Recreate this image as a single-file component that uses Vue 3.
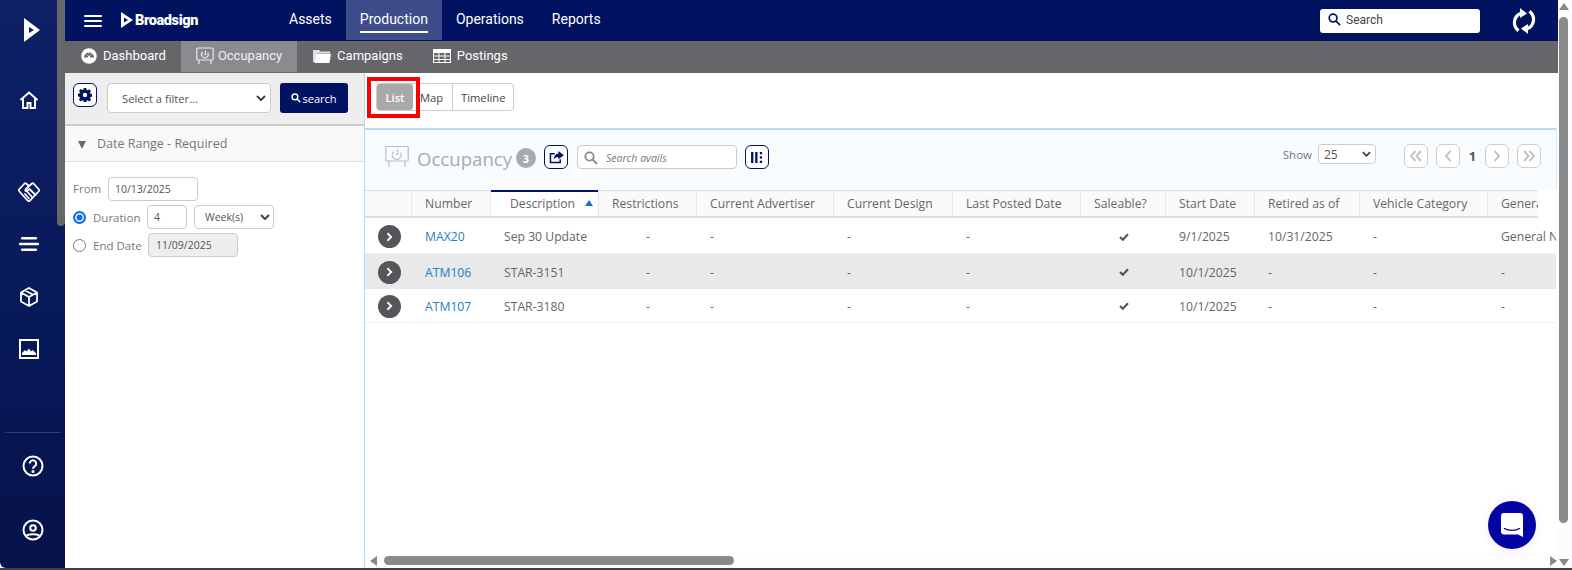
<script setup>
const columns = [
  { label: '', cls: '' },
  { label: 'Number', cls: '' },
  { label: 'Description', cls: 'sorted' },
  { label: 'Restrictions', cls: '' },
  { label: 'Current Advertiser', cls: '' },
  { label: 'Current Design', cls: '' },
  { label: 'Last Posted Date', cls: '' },
  { label: 'Saleable?', cls: '' },
  { label: 'Start Date', cls: '' },
  { label: 'Retired as of', cls: '' },
  { label: 'Vehicle Category', cls: '' },
  { label: 'General Notes', cls: '' }
]
const rows = [
  { num: 'MAX20', desc: 'Sep 30 Update', start: '9/1/2025', retired: '10/31/2025', general: 'General Notes' },
  { num: 'ATM106', desc: 'STAR-3151', start: '10/1/2025', retired: '-', general: '-' },
  { num: 'ATM107', desc: 'STAR-3180', start: '10/1/2025', retired: '-', general: '-' }
]
const topItems = ['Assets', 'Production', 'Operations', 'Reports']
</script>

<template>
  <div class="window">
    <div class="body">
      <aside class="rail">
        <div class="rail-thumb"></div>
        <svg class="r-logo" viewBox="0 0 16 24" width="16" height="24"><path fill="#fff" fill-rule="evenodd" d="M0 0l16 12L0 24zM5 9v6l5-3z"/></svg>
        <svg class="r-ico r-home" viewBox="0 0 20 20" width="20" height="20" fill="none" stroke="#fff" stroke-width="2"><path d="M1.500 10L10 2.500 18.500 10M4 8.500V18h4.500v-5h3v5H16V8.500"/></svg>
        <svg class="r-ico r-deal" viewBox="0 0 22 20" width="22" height="20" fill="none" stroke="#fff" stroke-width="1.800" stroke-linejoin="round" stroke-linecap="round"><path d="M6.500 1.500L1 7.500c-.4.500-.4 1 0 1.500l8.500 9.500c.8.900 1.800.9 2.600 0L21 9c.4-.5.4-1 0-1.500l-5.500-6c-.5-.4-1-.4-1.500 0L11 4 8 1.500c-.5-.4-1-.4-1.500 0z"/><path d="M11 4L7.500 7.500c-.8 1 .5 2.300 1.500 1.500L11.500 7l6 6M7 12l4 4.500M10 10.500l4.500 5"/></svg>
        <svg class="r-ico r-bars" viewBox="0 0 20 14" width="20" height="14" fill="#fff"><rect x="2" y="0" width="16" height="2.400" rx="1"/><rect x="0" y="5.800" width="20" height="2.400" rx="1"/><rect x="2" y="11.600" width="16" height="2.400" rx="1"/></svg>
        <svg class="r-ico r-box" viewBox="0 0 20 20" width="20" height="20" fill="none" stroke="#fff" stroke-width="1.800"><path d="M10 1l8 4.500v9L10 19l-8-4.500v-9zM2 5.500L10 10l8-4.500M10 10v9M6 3.300l8 4.500"/></svg>
        <svg class="r-ico r-img" viewBox="0 0 20 20" width="20" height="20"><rect x="1" y="1" width="18" height="18" fill="none" stroke="#fff" stroke-width="2"/><path fill="#fff" d="M3 16v-2l3-3 1.500 1.500L10 9.500l2 3 1.500-1.500 3.500 3v2z"/></svg>
        <div class="rail-bottom">
          <svg viewBox="0 0 22 22" width="22" height="22" fill="none" stroke="#fff" stroke-width="2"><circle cx="11" cy="11" r="9.500"/><path d="M7.800 8.500a3.200 3.200 0 1 1 4.800 2.800c-1 .6-1.600 1.100-1.600 2.400"/><circle cx="11" cy="16.500" r=".6" fill="#fff"/></svg>
          <svg viewBox="0 0 22 22" width="22" height="22" fill="none" stroke="#fff" stroke-width="2"><circle cx="11" cy="11" r="9.500"/><circle cx="11" cy="9" r="2.800"/><path d="M4.500 17c1.500-2.500 11.500-2.500 13 0"/></svg>
        </div>
      </aside>

      <div class="content">
        <header class="topnav">
          <svg class="burger" viewBox="0 0 18 12" width="18" height="12" fill="#fff"><rect width="18" height="2" rx="1"/><rect y="5" width="18" height="2" rx="1"/><rect y="10" width="18" height="2" rx="1"/></svg>
          <div class="brand">
            <svg viewBox="0 0 12 16" width="12" height="16"><path fill="#fff" fill-rule="evenodd" d="M0 0l12 8-12 8zM3 5.500v5L7 8z"/></svg>
            <span>Broadsign</span>
          </div>
          <nav class="topitems">
            <a v-for="item in topItems" :key="item" class="topitem" :class="{ active: item === 'Production' }"><span>{{ item }}</span></a>
          </nav>
          <div class="topsearch">
            <svg viewBox="0 0 14 14" width="13" height="13" fill="none" stroke="#001260" stroke-width="1.800"><circle cx="5.500" cy="5.500" r="4.200"/><path d="M8.700 8.700L13 13"/></svg>
            <span>Search</span>
          </div>
          <svg class="sync" viewBox="0 0 24 26" width="24" height="26"><path fill="none" stroke="#fff" stroke-width="3.200" d="M9 5.200C2 7.800 -.2 17 6.500 22.800"/><path fill="#fff" d="M8 0l7 5.500L8 10z"/><path fill="none" stroke="#fff" stroke-width="3.200" d="M15 20.800C22 18.200 24.200 9 17.500 3.200"/><path fill="#fff" d="M16 26l-7-5.500L16 16z"/></svg>
        </header>

        <nav class="subnav">
          <a class="subitem s-dash">
            <svg viewBox="0 0 16 16" width="16" height="16"><circle cx="8" cy="8" r="7.800" fill="#fff"/><path d="M3 9.500a5 5 0 0 1 10 0H9.500L8 7 6.500 9.500z" fill="#66656a"/><path d="M5.300 6.300l1 1.200M8 4.500v1.500M10.700 6.300l-1 1.200" stroke="#fff" stroke-width=".8"/></svg>
            Dashboard
          </a>
          <a class="subitem s-occ active">
            <svg viewBox="0 0 18 18" width="18" height="18" fill="none" stroke="#e8e8e8" stroke-width="1.200"><rect x=".8" y="1" width="16.400" height="12" rx="1"/><path d="M3 13v4M15 13v4"/><path d="M9.500 3.800v3.700H8M6.700 5a3.300 3.300 0 1 0 5 .8"/></svg>
            Occupancy
          </a>
          <a class="subitem s-camp">
            <svg viewBox="0 0 18 15" width="18" height="15"><path fill="#fff" d="M0 2h6l1.500 1.500H17V5H4L2 14H0z" opacity=".8"/><path fill="#fff" d="M3.500 5.500H18L16.500 15H1.500z"/></svg>
            Campaigns
          </a>
          <a class="subitem s-post">
            <svg viewBox="0 0 18 14" width="18" height="14"><path fill="#fff" fill-rule="evenodd" d="M0 0h18v14H0zM1 4v2.500h4.500V4zM6.500 4v2.500h5V4zM12.500 4v2.500H17V4zM1 7.500V10h4.500V7.500zM6.500 7.500V10h5V7.500zM12.500 7.500V10H17V7.500zM1 11v2h4.500v-2zM6.500 11v2h5v-2zM12.500 11v2H17v-2z"/></svg>
            Postings
          </a>
        </nav>

        <div class="workspace">
          <section class="filters">
            <div class="filter-bar">
              <button class="icon-btn gear">
                <svg viewBox="0 0 16 16" width="14" height="14"><path fill="#001260" fill-rule="evenodd" d="M6.600 0h2.800l.4 2.100 1.300.6 1.800-1.200 2 2-1.200 1.800.6 1.300 2.100.4v2.800l-2.100.4-.6 1.300 1.200 1.800-2 2-1.800-1.200-1.300.6-.4 2.100H6.600l-.4-2.100-1.300-.6-1.800 1.200-2-2 1.200-1.800-.6-1.300L-.4 9.400V6.600l2.100-.4.6-1.300L1.100 3.100l2-2 1.800 1.200 1.300-.6zM8 5.500a2.500 2.500 0 1 0 0 5 2.500 2.500 0 0 0 0-5z"/></svg>
              </button>
              <div class="fake-select filter-select">
                <span>Select a filter...</span>
                <svg class="chev" viewBox="0 0 10 6" width="10" height="6" fill="none" stroke="#444" stroke-width="2"><path d="M1 1l4 4 4-4"/></svg>
              </div>
              <button class="search-btn">
                <svg viewBox="0 0 14 14" width="10" height="10" fill="none" stroke="#fff" stroke-width="2"><circle cx="5.500" cy="5.500" r="4"/><path d="M8.500 8.500L13 13"/></svg>
                <span>search</span>
              </button>
            </div>
            <div class="acc-head">
              <span class="tri"></span>
              <span>Date Range - Required</span>
            </div>
            <div class="acc-body">
              <div class="f-row">
                <label class="lbl-from">From</label>
                <div class="inp w-date">10/13/2025</div>
              </div>
              <div class="f-row">
                <span class="radio on"></span>
                <label class="lbl-radio">Duration</label>
                <div class="inp w-num">4</div>
                <div class="fake-select w-unit">
                  <span>Week(s)</span>
                  <svg class="chev" viewBox="0 0 10 6" width="10" height="6" fill="none" stroke="#444" stroke-width="2"><path d="M1 1l4 4 4-4"/></svg>
                </div>
              </div>
              <div class="f-row">
                <span class="radio"></span>
                <label class="lbl-radio">End Date</label>
                <div class="inp w-date disabled">11/09/2025</div>
              </div>
            </div>
          </section>

          <main class="main">
            <div class="view-bar">
              <div class="view-tabs">
                <a class="vt active">List</a>
                <a class="vt map">Map</a>
                <a class="vt">Timeline</a>
                <span class="highlight"></span>
              </div>
            </div>
            <div class="panel">
              <div class="panel-left">
                <svg viewBox="0 0 24 23" width="24" height="23" fill="none" stroke="#bbb" stroke-width="1.200"><rect x=".8" y="1.500" width="22.400" height="14.500" rx="1"/><path d="M4 16V22M20 16V22"/><path d="M12.500 4.500v5H10.500M8.800 6.500a4.500 4.500 0 1 0 6.700 1"/></svg>
                <h2>Occupancy</h2>
                <span class="badge">3</span>
                <button class="icon-btn export">
                  <svg viewBox="0 0 16 14" width="15" height="13"><path fill="none" stroke="#001260" stroke-width="1.600" d="M6 3H1.500v9.500H12V9"/><path fill="#001260" d="M10 0l6 4.500L10 9V6.500C7.500 6.500 6 7.500 5 9.500 5 6 7 3 10 2.800z"/></svg>
                </button>
                <div class="avails">
                  <svg viewBox="0 0 14 14" width="14" height="14" fill="none" stroke="#888" stroke-width="1.800"><circle cx="5.500" cy="5.500" r="4.200"/><path d="M8.700 8.700L13 13"/></svg>
                  <span>Search avails</span>
                </div>
                <button class="icon-btn cols">
                  <svg viewBox="0 0 14 12" width="13" height="11" fill="#001260"><rect width="2.500" height="12"/><rect x="4.500" width="2.500" height="12"/><rect x="9.500" width="2.500" height="2.500"/><rect x="9.500" y="4.700" width="2.500" height="2.500"/><rect x="9.500" y="9.500" width="2.500" height="2.500"/></svg>
                </button>
              </div>
              <div class="panel-right">
                <span class="show">Show</span>
                <div class="fake-select w-show">
                  <span>25</span>
                  <svg class="chev" viewBox="0 0 10 6" width="9" height="6" fill="none" stroke="#444" stroke-width="2"><path d="M1 1l4 4 4-4"/></svg>
                </div>
                <div class="pager">
                  <button class="pg"><svg viewBox="0 0 14 12" width="14" height="12" fill="none" stroke="#c4c4c4" stroke-width="2"><path d="M6.500 1L2 6l4.500 5M12 1L7.500 6l4.500 5"/></svg></button>
                  <button class="pg"><svg viewBox="0 0 8 12" width="8" height="12" fill="none" stroke="#c4c4c4" stroke-width="2"><path d="M6.500 1L2 6l4.500 5"/></svg></button>
                  <b>1</b>
                  <button class="pg"><svg viewBox="0 0 8 12" width="8" height="12" fill="none" stroke="#c4c4c4" stroke-width="2"><path d="M1.500 1L6 6l-4.500 5"/></svg></button>
                  <button class="pg"><svg viewBox="0 0 14 12" width="14" height="12" fill="none" stroke="#c4c4c4" stroke-width="2"><path d="M2 1l4.500 5L2 11M7.500 1L12 6l-4.500 5"/></svg></button>
                </div>
              </div>
            </div>

            <div class="thead-wrap">
              <div class="grid thead">
                <div v-for="c in columns" :key="c.label" class="th" :class="c.cls">
                  <span>{{ c.label }}</span>
                  <i v-if="c.cls === 'sorted'" class="sort"></i>
                </div>
              </div>
            </div>
            <div class="tbody-wrap">
              <div v-for="(r, i) in rows" :key="r.num" class="grid tr" :class="{ odd: i === 1 }">
                <div class="td exp">
                  <span class="expander"><svg viewBox="0 0 8 12" width="7" height="10" fill="none" stroke="#fff" stroke-width="2.200"><path d="M1.500 1.500L6 6l-4.500 4.500"/></svg></span>
                </div>
                <div class="td link">{{ r.num }}</div>
                <div class="td desc">{{ r.desc }}</div>
                <div class="td center">-</div>
                <div class="td">-</div>
                <div class="td">-</div>
                <div class="td">-</div>
                <div class="td center"><svg viewBox="0 0 12 10" width="10" height="8" fill="none" stroke="#555" stroke-width="2.600"><path d="M1 5l3.500 3.500L11 1.500"/></svg></div>
                <div class="td">{{ r.start }}</div>
                <div class="td">{{ r.retired }}</div>
                <div class="td">-</div>
                <div class="td nowrap">{{ r.general }}</div>
              </div>
            </div>
            <div class="spacer"></div>
            <div class="hscroll">
              <svg viewBox="0 0 7 10" width="7" height="10"><path fill="#888" d="M7 0v10L0 5z"/></svg>
              <span class="hthumb"></span>
              <svg class="harrow" viewBox="0 0 7 10" width="7" height="10"><path fill="#888" d="M0 0v10l7-5z"/></svg>
            </div>
          </main>
        </div>
      </div>

      <div class="vscroll">
        <svg viewBox="0 0 10 7" width="10" height="7"><path fill="#888" d="M5 0l5 7H0z"/></svg>
        <span class="vthumb"></span>
        <svg viewBox="0 0 10 7" width="10" height="7"><path fill="#888" d="M5 7l5-7H0z"/></svg>
      </div>

      <button class="chat">
        <svg viewBox="0 0 22 24" width="22" height="24"><path fill="#fff" d="M3 0h16a3 3 0 0 1 3 3v21l-5-2.500H3a3 3 0 0 1-3-3V3a3 3 0 0 1 3-3z"/><path fill="none" stroke="#0404a4" stroke-width="1.400" stroke-linecap="round" d="M3.500 15.500c4 2.500 11 2.500 15 0"/></svg>
      </button>
    </div>
    <div class="edge"></div>
  </div>
</template>

<style>
html, body { margin: 0; overflow: hidden; background: #fff; }
</style>

<style scoped>
.window { width: 1572px; height: 570px; display: flex; flex-direction: column; overflow: hidden; position: relative; font-family: "Open Sans", sans-serif; color: #666; }
.body { flex: 1; display: flex; min-height: 0; position: relative; }
.edge { height: 2px; background: #3f3f3f; }

.rail { width: 65px; flex: none; position: relative; display: flex; flex-direction: column; box-sizing: border-box; background: linear-gradient(180deg, #0e2164 0%, #081a5c 50%, #06124a 100%); border-bottom-left-radius: 6px; }
.rail-thumb { position: absolute; left: 57px; top: 0; width: 8px; height: 226px; background: #66666b; border-radius: 0 0 4px 4px; }
.r-logo { margin: 18px 0 0 24px; }
.r-ico { display: block; align-self: center; margin-right: 8px; }
.r-home { margin-top: 48px; }
.r-deal { margin-top: 72px; }
.r-bars { margin-top: 35px; }
.r-box { margin-top: 36px; }
.r-img { margin-top: 32px; }
.rail-bottom { margin: 73px 4px 0 5px; padding-top: 22px; border-top: 1px solid #2b3a73; display: flex; flex-direction: column; align-items: center; gap: 42px; }
.rail-bottom svg { display: block; }

.content { flex: 1; min-width: 0; display: flex; flex-direction: column; }
.topnav { height: 41px; flex: none; background: #001260; display: flex; align-items: center; font-family: Roboto, sans-serif; box-sizing: border-box; }
.burger { margin-left: 19px; }
.brand { margin-left: 19px; display: flex; align-items: center; gap: 2px; color: #fff; font-weight: 900; font-size: 14.500px; letter-spacing: -.4px; width: 91px; padding-bottom: 1px; }
.topitems { display: flex; align-self: stretch; margin-left: 63px; }
.topitem { color: #fff; font-size: 14px; display: flex; align-items: center; padding: 0 14px 2px; height: 40px; box-sizing: border-box; }
.topitem.active { background: #3e4d8a; }
.topitem.active span { border-bottom: 2px solid #fff; padding-bottom: 4px; margin-top: 6px; }
.topsearch { margin-left: auto; width: 160px; height: 24px; background: #fff; border-radius: 3px; display: flex; align-items: center; gap: 5px; padding: 0 0 2px 8px; box-sizing: border-box; font-size: 12px; color: #444; }
.sync { margin: 0 22px 0 32px; }

.subnav { height: 32px; flex: none; background: #66656a; display: flex; font-family: Roboto, sans-serif; }
.subitem { color: #fff; font-size: 13px; display: flex; align-items: center; gap: 6px; padding: 0 15px 2px; height: 31px; box-sizing: border-box; }
.subitem.active { background: #8b8a8f; color: #f0f0f0; gap: 4px; }
.s-dash, .s-camp { padding-left: 16px; }

.workspace { flex: 1; min-height: 0; display: flex; }
.filters { width: 299px; flex: none; display: flex; flex-direction: column; }
.filter-bar { height: 53px; box-sizing: border-box; background: #eee; border-bottom: 2px solid #ccc; display: flex; align-items: flex-start; padding: 10px 0 0 8px; }
.icon-btn { width: 24px; height: 24px; padding: 0; background: #fff; border: 1px solid #001260; border-radius: 6px; display: flex; align-items: center; justify-content: center; box-sizing: border-box; }
.fake-select { display: flex; align-items: center; justify-content: space-between; background: #fff; border: 1px solid #ccc; border-radius: 4px; box-sizing: border-box; font-size: 11.200px; color: #555; }
.chev { flex: none; }
.filter-select { width: 164px; height: 30px; margin-left: 10px; padding: 0 4px 0 14px; }
.search-btn { width: 68px; height: 30px; margin-left: 9px; background: #001260; border: 0; border-radius: 3px; color: #fff; font: 11px "Open Sans", sans-serif; display: flex; align-items: center; justify-content: center; gap: 1px; padding: 0; }
.acc-head { height: 36px; box-sizing: border-box; background: #f9f9f9; border-bottom: 1px solid #ddd; display: flex; align-items: center; padding-left: 13px; gap: 11px; font-size: 12.500px; color: #777; }
.tri { width: 0; height: 0; border-left: 4px solid transparent; border-right: 4px solid transparent; border-top: 8px solid #6b6b6b; margin-top: 3px; }
.acc-body { padding: 15px 0 0 8px; display: flex; flex-direction: column; gap: 4px; font-size: 11.500px; }
.f-row { display: flex; align-items: center; height: 24px; color: #777; }
.lbl-from { width: 35px; padding-bottom: 2px; }
.lbl-radio { margin-left: 7px; width: 54px; }
.radio { width: 13px; height: 13px; box-sizing: border-box; border: 1px solid #777; border-radius: 50%; background: #fff; }
.radio.on { border: 2px solid #0b6fe8; box-shadow: inset 0 0 0 1.500px #fff; background: #0b6fe8; }
.inp { height: 24px; box-sizing: border-box; border: 1px solid #ccc; border-radius: 4px; background: #fff; display: flex; align-items: center; padding-left: 6px; color: #555; font-size: 10.500px; }
.w-date { width: 90px; }
.w-num { width: 40px; }
.w-unit { width: 80px; height: 24px; margin-left: 7px; padding: 0 3px 0 10px; font-size: 10.500px; }
.disabled { background: #eee; margin-left: 1px; padding-left: 7px; }

.main { flex: 1; min-width: 0; display: flex; flex-direction: column; border-left: 1px solid #b5d8fb; }
.view-bar { height: 55px; flex: none; box-sizing: border-box; padding: 10px 0 0 11px; }
.view-tabs { display: inline-flex; position: relative; height: 28px; border: 1px solid #ccc; border-radius: 4px; box-sizing: border-box; font-size: 11.200px; color: #444; }
.vt { display: flex; align-items: center; padding: 0 8px; }
.vt.active { width: 36px; box-sizing: border-box; justify-content: center; background: #a9a9a9; color: #fff; font-weight: 600; border-radius: 3px; padding: 0; font-size: 11px; }
.vt.map { width: 40px; box-sizing: border-box; border-right: 1px solid #ccc; padding: 0 0 0 7px; }
.highlight { position: absolute; left: -10px; top: -7px; width: 53px; height: 41px; border: 4px solid #ff0000; box-sizing: border-box; }

.panel { height: 62px; flex: none; box-sizing: border-box; background: #f8fcff; border-top: 2px solid #b5d8fb; border-right: 1px solid #d3e8fb; margin-right: 1px; display: flex; justify-content: space-between; padding: 15px 15px 0 20px; }
.panel-left { display: flex; align-items: flex-start; }
.panel-left h2 { margin: 0 0 0 8px; font-weight: 400; font-size: 18.600px; line-height: 27px; color: #aaa; width: 99px; }
.badge { width: 20px; height: 20px; margin-top: 3px; border-radius: 50%; background: #aaa; color: #fff; font-size: 11px; font-weight: 700; display: flex; align-items: center; justify-content: center; }
.export { margin-left: 8px; }
.avails { width: 160px; height: 24px; margin-left: 9px; box-sizing: border-box; border: 1px solid #ccc; border-radius: 4px; background: #fff; display: flex; align-items: center; padding: 2px 0 0 6px; gap: 8px; font-size: 10.500px; font-style: italic; color: #777; }
.cols { margin-left: 8px; }
.panel-right { display: flex; align-items: flex-start; font-size: 11.500px; margin-top: -1px; }
.show { margin-top: 3px; color: #777; }
.w-show { width: 58px; height: 20px; margin-left: 6px; padding: 0 4px 0 5px; font-size: 12px; }
.pager { display: flex; align-items: center; margin-left: 28px; }
.pg { width: 24px; height: 24px; padding: 0; background: #fff; border: 1px solid #ccc; border-radius: 6px; display: flex; align-items: center; justify-content: center; box-sizing: border-box; margin-right: 8px; }
.pager b { width: 9px; margin: 0 8px 0 0; font-size: 13px; color: #555; text-align: center; }
.pager .pg:last-child { margin-right: 0; }

.grid { display: grid; grid-template-columns: 47px 79px 108px 98px 137px 119px 128px 85px 89px 105px 128px 120px; }
.thead-wrap { width: 1173px; overflow: hidden; flex: none; }
.thead { height: 28px; box-sizing: border-box; background: #fafafa; border-top: 1px solid #ddd; border-bottom: 2px solid #ddd; font-size: 12.200px; color: #666; width: 1243px; }
.th { display: flex; align-items: center; padding-left: 13px; border-right: 1px solid #e8e8e8; box-sizing: border-box; white-space: nowrap; overflow: hidden; position: relative; }
.th.sorted { background: #fff; box-shadow: inset 0 2px 0 #001260; padding-left: 19px; margin-top: -1px; }
.sort { width: 0; height: 0; border-left: 4px solid transparent; border-right: 4px solid transparent; border-bottom: 6px solid #1570c9; margin-left: 10px; }
.tbody-wrap { width: 1191px; overflow: hidden; flex: none; }
.tr { height: 37px; width: 1243px; box-sizing: border-box; border-bottom: 2px solid #eee; padding-top: 2px; font-size: 12.200px; color: #666; }
.tr:last-child { height: 34px; padding-top: 1px; border-bottom-width: 1px; }
.tr.odd { background: #e9e9e9; height: 34px; border-bottom: 0; padding-top: 0; }
.td { display: flex; align-items: center; padding-left: 13px; box-sizing: border-box; white-space: nowrap; overflow: hidden; }
.td.center { padding: 0; justify-content: center; }
.td.exp { padding-left: 13px; }
.td.link { color: #1a7fc9; }
.expander { width: 23px; height: 23px; border-radius: 50%; background: #54565a; display: flex; align-items: center; justify-content: center; }
.spacer { flex: 1; }
.hscroll { height: 15px; flex: none; display: flex; align-items: center; background: #fdfdfd; padding-left: 5px; box-sizing: border-box; }
.hthumb { width: 350px; height: 9px; border-radius: 5px; background: #8a8a8a; margin-left: 7px; }
.harrow { margin-left: auto; margin-right: 1px; }

.vscroll { width: 14px; flex: none; background: #fcfcfc; display: flex; flex-direction: column; align-items: center; padding: 3px 3px 2px 0; box-sizing: border-box; }
.vthumb { width: 9px; height: 506px; margin: 7px 0 auto; border-radius: 5px; background: #8a8a8a; }

.chat { position: absolute; left: 1488px; top: 501px; width: 48px; height: 48px; border: 0; padding: 0; border-radius: 50%; background: #0404a4; box-shadow: 0 1px 12px rgba(0,0,0,.08); display: flex; align-items: center; justify-content: center; }
</style>
